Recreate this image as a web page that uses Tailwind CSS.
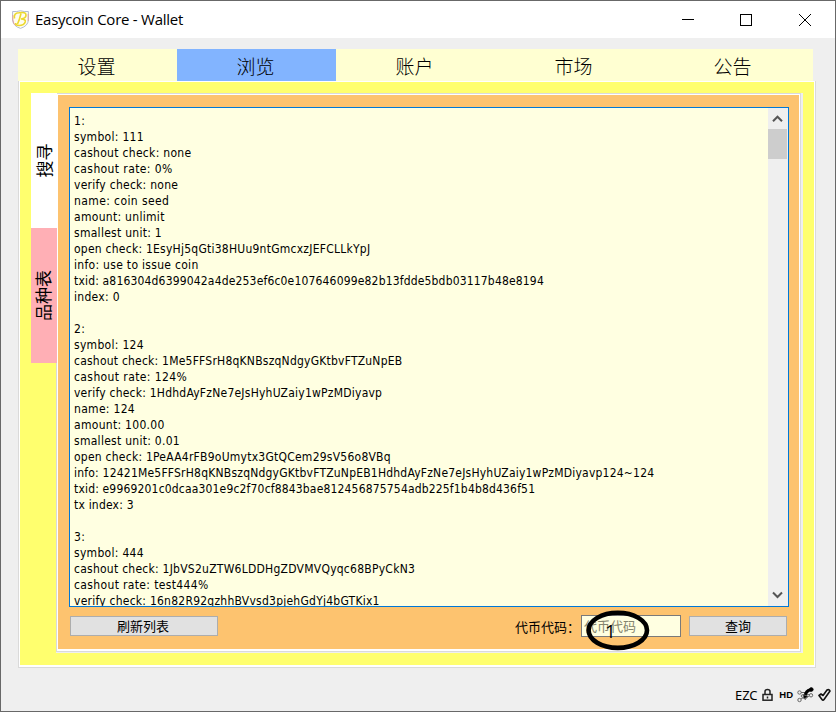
<!DOCTYPE html>
<html lang="zh-CN">
<head>
<meta charset="utf-8">
<title>Easycoin Core - Wallet</title>
<script src="https://cdn.jsdelivr.net/npm/@tailwindcss/browser@4"></script>
</head>
<body class="w-[836px] h-[712px] overflow-hidden text-black font-['Noto_Sans_CJK_SC',sans-serif]">
<div class="w-[836px] h-[712px] border border-[#686868] bg-[#efefef] flex flex-col">
  <header class="h-[37px] shrink-0 bg-white flex items-center pl-[11px]">
    <svg class="w-[17px] h-[19px] shrink-0" viewBox="0 0 17 19" fill="none"><path d="M.6 1.500Q5 2 8.500 .7Q12 2 16.400 1.500V10Q16 16 8.500 18.400Q1 16 .6 10Z" fill="#fffdf0" stroke="#b3bdd2"/><path d="M.8 5v5q.5 4 3.200 6M16.200 4v7" stroke="#e3a5a0"/><path d="M2.500 8.500Q1.500 3 7 2.800Q14 1.800 14 5Q14 8.500 9 9Q14 9 13.200 12Q12 15.500 7 15.500Q3.500 15.500 3.500 13M9 3.500Q7.500 10 5.500 14" stroke="#ecd82e" stroke-width="1.600"/></svg>
    <h1 class="ml-[6px] mb-[2px] text-[15px] leading-[20px] whitespace-nowrap font-['Open_Sans',sans-serif] tracking-[-0.25px]">Easycoin Core - Wallet</h1>
    <svg class="ml-auto w-[130px] h-[14px] mr-[23px] shrink-0" viewBox="0 0 130 14" fill="none" stroke="#000"><path d="M0 6.500H12"/><rect x="58.500" y="1.500" width="11" height="11"/><path d="M117 1L129 13M129 1L117 13"/></svg>
  </header>
  <nav class="mt-[11px] ml-[17px] h-[32px] w-[795px] shrink-0 grid grid-cols-5 bg-[#ffffd2] text-[19px] leading-[34px] text-center font-['Noto_Sans_CJK_SC',sans-serif] font-light">
    <div class="pr-[2px]">设置</div><div class="bg-[#82b4ff] pr-[2px]">浏览</div><div class="pr-[2px]">账户</div><div class="pr-[2px]">市场</div><div class="pr-[2px]">公告</div>
  </nav>
  <main class="ml-[17px] w-[798px] h-[587px] shrink-0 border border-t-0 border-[#dadada]">
    <div class="w-full h-full border border-b-2 border-white bg-[#ffff6e] flex pt-[11px] pl-[11px]">
      <aside class="w-[26px] shrink-0 flex flex-col text-[17px]">
        <div class="relative z-10 h-[135px] bg-white flex items-center justify-center pr-[3px]"><span class="-rotate-90 whitespace-nowrap leading-none">搜寻</span></div>
        <div class="relative z-10 h-[135px] bg-[#ffafb5] flex items-center justify-center pr-[3px]"><span class="-rotate-90 whitespace-nowrap leading-none">品种表</span></div>
      </aside>
      <section class="-ml-px w-[747px] h-[560px] shrink-0 border-r-2 border-b border-[#efefef]">
        <div class="w-full h-full border border-[#dadada]">
          <div class="w-full h-full border border-b-2 border-white bg-[#fdc36f] pt-[12px] pl-[11px]">
            <div class="w-[720px] h-[500px] border border-[#0078d7] bg-[#ffffe1] flex">
              <div class="w-[698px] h-[498px] overflow-hidden pt-[5px] pl-[4px] whitespace-nowrap text-[12px] leading-[16px] font-['DejaVu_Sans_Condensed','DejaVu_Sans',sans-serif] font-stretch-condensed tracking-[0.3px]">
                <p>1:</p>
                <p>symbol: 111</p>
                <p>cashout check: none</p>
                <p class="tracking-[0.4px]">cashout rate: 0%</p>
                <p class="tracking-[0.26px]">verify check: none</p>
                <p class="tracking-[0.4px]">name: coin seed</p>
                <p>amount: unlimit</p>
                <p class="tracking-[0.28px]">smallest unit: 1</p>
                <p class="tracking-[0.24px]">open check: 1EsyHj5qGti38HUu9ntGmcxzJEFCLLkYpJ</p>
                <p>info: use to issue coin</p>
                <p class="tracking-[0.17px]">txid: a816304d6399042a4de253ef6c0e107646099e82b13fdde5bdb03117b48e8194</p>
                <p>index: 0</p>
                <p>&nbsp;</p>
                <p>2:</p>
                <p>symbol: 124</p>
                <p class="tracking-[0.22px]">cashout check: 1Me5FFSrH8qKNBszqNdgyGKtbvFTZuNpEB</p>
                <p class="tracking-[0.4px]">cashout rate: 124%</p>
                <p class="tracking-[0.23px]">verify check: 1HdhdAyFzNe7eJsHyhUZaiy1wPzMDiyavp</p>
                <p>name: 124</p>
                <p>amount: 100.00</p>
                <p class="tracking-[0.28px]">smallest unit: 0.01</p>
                <p class="tracking-[0.24px]">open check: 1PeAA4rFB9oUmytx3GtQCem29sV56o8VBq</p>
                <p class="tracking-[0.21px]">info: 12421Me5FFSrH8qKNBszqNdgyGKtbvFTZuNpEB1HdhdAyFzNe7eJsHyhUZaiy1wPzMDiyavp124~124</p>
                <p class="tracking-[0.17px]">txid: e9969201c0dcaa301e9c2f70cf8843bae812456875754adb225f1b4b8d436f51</p>
                <p class="tracking-[0.2px]">tx index: 3</p>
                <p>&nbsp;</p>
                <p>3:</p>
                <p>symbol: 444</p>
                <p class="tracking-[0.25px]">cashout check: 1JbVS2uZTW6LDDHgZDVMVQyqc68BPyCkN3</p>
                <p class="tracking-[0.36px]">cashout rate: test444%</p>
                <p class="tracking-[0.24px]">verify check: 16n82R92qzhhBVvsd3pjehGdYj4bGTKix1</p>
              </div>
              <div class="w-[20px] h-[498px] bg-[#efefef] flex flex-col">
                <svg class="w-[20px] h-[21px] shrink-0" viewBox="0 0 20 21" fill="none" stroke="#555" stroke-width="2"><path d="M5 13.200L9.500 8.700L14 13.200"/></svg>
                <div class="w-[19px] h-[30px] bg-[#cdcdcd]"></div>
                <svg class="mt-auto w-[20px] h-[21px] shrink-0" viewBox="0 0 20 21" fill="none" stroke="#555" stroke-width="2"><path d="M5 7.500L9.500 12L14 7.500"/></svg>
              </div>
            </div>
            <div class="mt-[8px] h-[22px] w-[717px] ml-px flex items-center text-[13px] leading-[17px]">
              <div class="w-[148px] h-[20px] border border-[#adadad] bg-[#e1e1e1] text-center pr-[2px]">刷新列表</div>
              <span class="ml-auto w-[66px] whitespace-nowrap">代币代码：</span>
              <div class="relative w-[100px] h-[22px] border border-[#7a7a7a] bg-[#ffffe1] pl-[2px] leading-[19px] text-[#85856f]">代币代码
                <svg class="absolute left-[3px] top-[-7px] w-[66px] h-[42px]" viewBox="0 0 66 42" fill="none"><ellipse cx="32.800" cy="21.300" rx="29.200" ry="17.600" stroke="#000" stroke-width="4.600"/></svg>
                <span class="absolute left-[23px] top-[4px] text-[19px] leading-[22px] text-black font-['Open_Sans',sans-serif]">1</span>
              </div>
              <div class="ml-[8px] w-[98px] h-[20px] border border-[#adadad] bg-[#e1e1e1] text-center">查询</div>
            </div>
          </div>
        </div>
      </section>
    </div>
  </main>
  <footer class="mt-[17px] h-[20px] flex items-center justify-end pr-[4px] font-['Liberation_Sans',sans-serif]">
    <span class="text-[13px] mr-[5px] leading-[20px] font-['Noto_Sans',sans-serif] tracking-[-0.2px]">EZC</span>
    <svg class="w-[11px] h-[14px] mr-[6px]" viewBox="0 0 11 14" fill="none" stroke="#222" stroke-width="1.500"><rect x="1" y="6.500" width="9" height="5.700"/><path d="M3 6V3.500Q3 1.500 5.500 1.500T8 3.500V6M5.500 8.500v2"/></svg>
    <span class="text-[9.500px] font-bold leading-[20px] mr-[4px]">HD</span>
    <svg class="w-[17px] h-[16px] mr-[4px]" viewBox="0 0 17 16" fill="none" stroke="#666"><circle cx="2.500" cy="5.500" r="1.700"/><circle cx="2.500" cy="13" r="1.700"/><circle cx="5.500" cy="9" r="1.300"/><circle cx="14" cy="8.300" r="1.700"/><path d="M4 5.500h4M4 12l5-3M8 13l2-3M9 7l4 1"/><path d="M8 9.500Q8.500 3.500 14 2.700" stroke="#000" stroke-width="3"/><path d="M6 7.500L7 12L11.500 9.500Z" fill="#000"/><circle cx="14.300" cy="2.500" r="1.800" fill="#000" stroke="#000"/></svg>
    <svg class="w-[13px] h-[14px]" viewBox="0 0 13 14" fill="none" stroke="#111" stroke-width="1.600" stroke-linejoin="round"><path d="M1 7.500L3 6L5 7.500L9 2Q11 .8 12 3L6 11.500Q5 13 4 11.500Z"/></svg>
  </footer>
</div>
</body>
</html>
